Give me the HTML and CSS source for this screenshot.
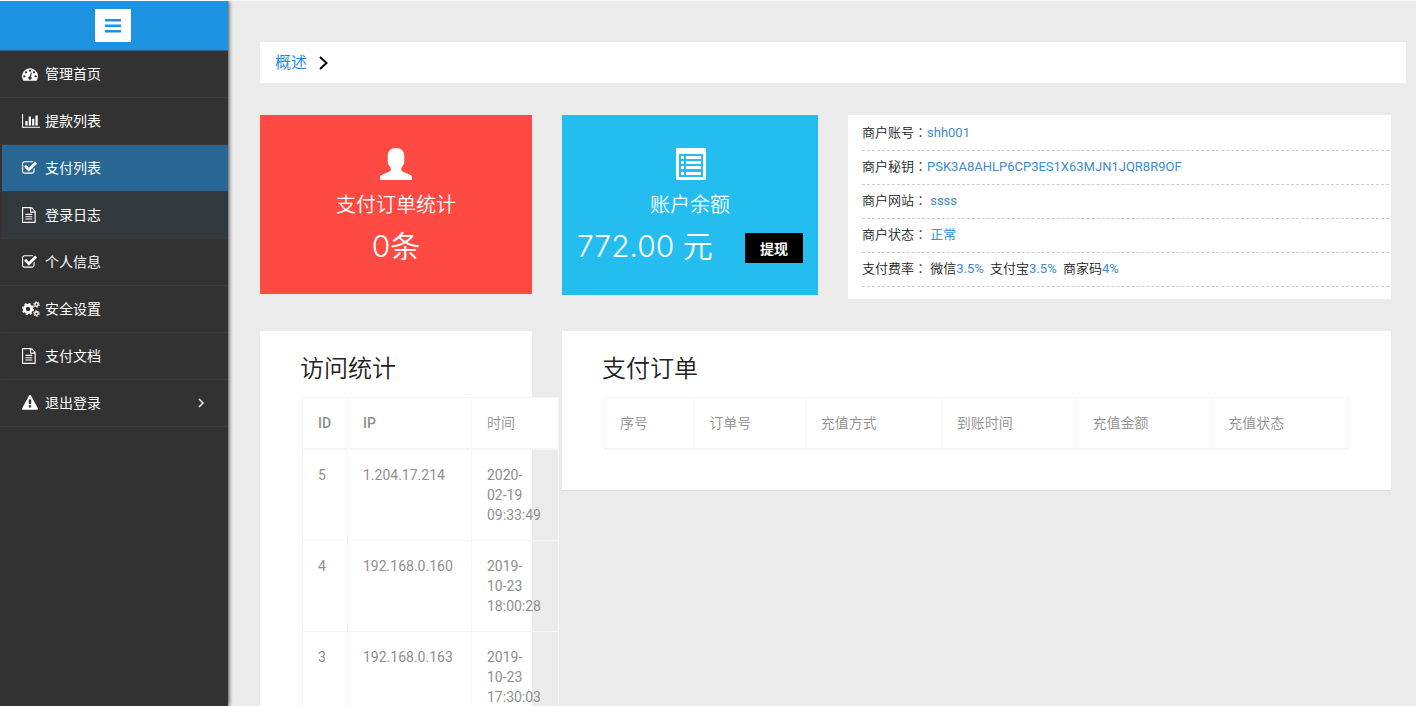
FILE: index.html
```html
<!DOCTYPE html>
<html lang="zh-CN">
<head>
<meta charset="utf-8">
<title>管理首页</title>
<link rel="stylesheet" href="styles.css">
</head>
<body>
<div class="layout">
  <aside class="sidebar">
    <div class="sidebar-head">
      <button class="toggle" type="button" aria-label="菜单">
        <svg width="16" height="14" viewBox="0 0 16 14"><path d="M0 0h16v2.500H0zM0 5.500h16v2.500H0zM0 11h16v2.500H0z"/></svg>
      </button>
    </div>
    <nav class="menu">
      <a class="item" href="#"><svg class="icon" viewBox="0 0 1792 1792"><path d="M384 1152q0-53-37.500-90.500t-90.500-37.500-90.500 37.500-37.500 90.500 37.500 90.500 90.500 37.500 90.500-37.500 37.500-90.500zm192-448q0-53-37.500-90.500t-90.500-37.500-90.500 37.500-37.500 90.500 37.500 90.500 90.500 37.500 90.500-37.500 37.500-90.500zm428 481l101-382q6-26-7.500-48.500t-38.500-29.500-48 6.500-30 39.500l-101 382q-60 5-107 43.500t-63 98.500q-20 77 20 146t117 89 146-20 89-117q16-60-6-117t-72-91zm660-33q0-53-37.500-90.500t-90.500-37.500-90.500 37.500-37.500 90.500 37.500 90.500 90.500 37.500 90.500-37.500 37.500-90.500zm-640-640q0-53-37.500-90.500t-90.500-37.500-90.500 37.500-37.500 90.500 37.500 90.500 90.500 37.500 90.500-37.500 37.500-90.500zm448 192q0-53-37.500-90.500t-90.500-37.500-90.500 37.500-37.500 90.500 37.500 90.500 90.500 37.500 90.500-37.500 37.500-90.500zm320 448q0 261-141 483-19 29-54 29h-1402q-35 0-54-29-141-221-141-483 0-182 71-348t191-286 286-191 348-71 348 71 286 191 191 286 71 348z"/></svg><span>管理首页</span></a>
      <a class="item" href="#"><svg class="icon icon-wide" viewBox="0 0 2048 1792"><path d="M640 896v512h-256v-512h256zm384-512v1024h-256v-1024h256zm1024 1152v128h-2048v-1536h128v1408h1920zm-640-896v768h-256v-768h256zm384-384v1152h-256v-1152h256z"/></svg><span>提款列表</span></a>
      <a class="item item-active" href="#"><svg class="icon" viewBox="64 0 1792 1792"><path d="M1472 930v318q0 119-84.500 203.500t-203.500 84.500h-832q-119 0-203.500-84.500t-84.500-203.500v-832q0-119 84.500-203.500t203.500-84.500h832q63 0 117 25 15 7 18 23 3 17-9 29l-49 49q-10 10-23 10-3 0-9-2-23-6-45-6h-832q-66 0-113 47t-47 113v832q0 66 47 113t113 47h832q66 0 113-47t47-113v-254q0-13 9-22l64-64q10-10 23-10 6 0 12 3 20 8 20 29zm231-489l-814 814q-24 24-57 24t-57-24l-430-430q-24-24-24-57t24-57l110-110q24-24 57-24t57 24l263 263 647-647q24-24 57-24t57 24l110 110q24 24 24 57t-24 57z"/></svg><span>支付列表</span></a>
      <a class="item item-open" href="#"><svg class="icon" viewBox="128 0 1792 1792"><path d="M1596 380q28 28 48 76t20 88v1152q0 40-28 68t-68 28h-1344q-40 0-68-28t-28-68v-1600q0-40 28-68t68-28h896q40 0 88 20t76 48zm-444-244v376h376q-10-29-22-41l-313-313q-12-12-41-22zm384 1528v-1024h-416q-40 0-68-28t-28-68v-416h-768v1536h1280zm-1024-864q0-14 9-23t23-9h704q14 0 23 9t9 23v64q0 14-9 23t-23 9h-704q-14 0-23-9t-9-23v-64zm736 224q14 0 23 9t9 23v64q0 14-9 23t-23 9h-704q-14 0-23-9t-9-23v-64q0-14 9-23t23-9h704zm0 256q14 0 23 9t9 23v64q0 14-9 23t-23 9h-704q-14 0-23-9t-9-23v-64q0-14 9-23t23-9h704z"/></svg><span>登录日志</span></a>
      <a class="item" href="#"><svg class="icon" viewBox="64 0 1792 1792"><path d="M1472 930v318q0 119-84.500 203.500t-203.500 84.500h-832q-119 0-203.500-84.500t-84.500-203.500v-832q0-119 84.500-203.500t203.500-84.500h832q63 0 117 25 15 7 18 23 3 17-9 29l-49 49q-10 10-23 10-3 0-9-2-23-6-45-6h-832q-66 0-113 47t-47 113v832q0 66 47 113t113 47h832q66 0 113-47t47-113v-254q0-13 9-22l64-64q10-10 23-10 6 0 12 3 20 8 20 29zm231-489l-814 814q-24 24-57 24t-57-24l-430-430q-24-24-24-57t24-57l110-110q24-24 57-24t57 24l263 263 647-647q24-24 57-24t57 24l110 110q24 24 24 57t-24 57z"/></svg><span>个人信息</span></a>
      <a class="item" href="#"><svg class="icon icon-wide" viewBox="0 0 18 16"><g fill="none" stroke="#fff"><circle cx="6" cy="8" r="3.600" stroke-width="2.800"/><circle cx="6" cy="8" r="5.300" stroke-width="1.600" stroke-dasharray="2.080 2.080"/><circle cx="14.500" cy="3.500" r="1.700" stroke-width="1.400"/><circle cx="14.500" cy="3.500" r="2.800" stroke-width="1" stroke-dasharray="1.470 1.460"/><circle cx="14.500" cy="12.500" r="1.700" stroke-width="1.400"/><circle cx="14.500" cy="12.500" r="2.800" stroke-width="1" stroke-dasharray="1.470 1.460"/></g></svg><span>安全设置</span></a>
      <a class="item" href="#"><svg class="icon" viewBox="128 0 1792 1792"><path d="M1596 380q28 28 48 76t20 88v1152q0 40-28 68t-68 28h-1344q-40 0-68-28t-28-68v-1600q0-40 28-68t68-28h896q40 0 88 20t76 48zm-444-244v376h376q-10-29-22-41l-313-313q-12-12-41-22zm384 1528v-1024h-416q-40 0-68-28t-28-68v-416h-768v1536h1280zm-1024-864q0-14 9-23t23-9h704q14 0 23 9t9 23v64q0 14-9 23t-23 9h-704q-14 0-23-9t-9-23v-64zm736 224q14 0 23 9t9 23v64q0 14-9 23t-23 9h-704q-14 0-23-9t-9-23v-64q0-14 9-23t23-9h704zm0 256q14 0 23 9t9 23v64q0 14-9 23t-23 9h-704q-14 0-23-9t-9-23v-64q0-14 9-23t23-9h704z"/></svg><span>支付文档</span></a>
      <a class="item" href="#"><svg class="icon" viewBox="0 0 1792 1792"><path d="M1024 1375v-190q0-14-9.500-23.500t-22.500-9.500h-192q-13 0-22.500 9.500t-9.500 23.500v190q0 14 9.500 23.500t22.500 9.500h192q13 0 22.500-9.500t9.500-23.500zm-2-374l18-459q0-12-10-19-13-11-24-11h-220q-11 0-24 11-10 7-10 21l17 457q0 10 10 16.500t24 6.500h185q14 0 23.500-6.500t10.500-16.500zm-14-934l768 1408q35 63-2 126-17 29-46.500 46t-63.500 17h-1536q-34 0-63.500-17t-46.500-46q-37-63-2-126l768-1408q17-31 47-49t65-18 65 18 47 49z"/></svg><span>退出登录</span><svg class="caret" width="6" height="10" viewBox="0 0 6 10"><path d="M1 1l4 4-4 4" fill="none" stroke="#fff" stroke-width="1.500"/></svg></a>
    </nav>
  </aside>

  <main class="main">
    <div class="crumbs"><a href="#">概述</a><svg width="9" height="14" viewBox="0 0 9 14"><path d="M1 1l6.500 6L1 13" fill="none" stroke="#000" stroke-width="2"/></svg></div>

    <div class="grid">
      <section class="stat stat-red">
        <svg width="32" height="32" viewBox="0 0 32 32"><path d="M16 0c5 0 8.300 3 8.300 8v5c0 3-1.300 5-3 6.500v2.300c0 1 .7 1.600 1.700 2l6.500 2.700c1.700.8 2.500 1.500 2.500 3V32H0v-2.500c0-1.500.8-2.200 2.500-3L9 23.800c1-.4 1.700-1 1.700-2v-2.300C9 18 7.700 16 7.700 13V8c0-5 3.300-8 8.300-8z"/></svg>
        <h3>支付订单统计</h3>
        <p class="figure">0条</p>
      </section>
      <section class="stat stat-blue">
        <svg width="32" height="32" viewBox="0 0 32 32"><path fill-rule="evenodd" d="M2 0h30v32H2zM5 6v23h24V6zM7 8h3v3H7zM12 8h15v3H12zM7 13h3v3H7zM12 13h15v3H12zM7 18h3v3H7zM12 18h15v3H12zM7 24h3v3H7zM12 24h15v3H12z"/></svg>
        <h3>账户余额</h3>
        <div class="balance"><p class="figure">772.00 元</p><button class="withdraw" type="button">提现</button></div>
      </section>
      <section class="info">
        <p>商户账号<span class="colon" lang="zh-TW">：</span><b>shh001</b></p>
        <p>商户秘钥<span class="colon" lang="zh-TW">：</span><b>PSK3A8AHLP6CP3ES1X63MJN1JQR8R9OF</b></p>
        <p>商户网站<span class="colon" lang="zh-TW">：</span> <b>ssss</b></p>
        <p>商户状态<span class="colon" lang="zh-TW">：</span> <a href="#">正常</a></p>
        <p>支付费率<span class="colon" lang="zh-TW">：</span> 微信<b>3.5%</b>&nbsp; 支付宝<b>3.5%</b>&nbsp; 商家码<b>4%</b></p>
      </section>

      <section class="panel panel-visits">
        <h2>访问统计</h2>
        <table class="visits">
          <thead><tr><th class="col-id">ID</th><th class="col-ip">IP</th><th class="col-time">时间</th></tr></thead>
          <tbody>
            <tr><td>5</td><td>1.204.17.214</td><td>2020-<br>02-19<br>09:33:49</td></tr>
            <tr><td>4</td><td>192.168.0.160</td><td>2019-<br>10-23<br>18:00:28</td></tr>
            <tr><td>3</td><td>192.168.0.163</td><td>2019-<br>10-23<br>17:30:03</td></tr>
          </tbody>
        </table>
      </section>
      <section class="panel panel-orders">
        <h2>支付订单</h2>
        <table class="orders">
          <thead><tr><th class="col-no">序号</th><th class="col-order">订单号</th><th>充值方式</th><th>到账时间</th><th>充值金额</th><th>充值状态</th></tr></thead>
        </table>
      </section>
    </div>
  </main>
</div>
</body>
</html>
```

FILE: styles.css
```css
* { box-sizing: border-box; }
body {
  margin: 0;
  background: #ebebeb;
  color: #222;
  font: 14px/20px Roboto, "Noto Sans CJK SC", sans-serif;
}
h2, h3, p { margin: 0; font-weight: 350; }
a { color: #1583d8; text-decoration: none; }
button { border: 0; padding: 0; font-family: inherit; }

.layout {
  display: flex;
  height: 100vh;
  overflow: hidden;
  border-top: 1px solid #f8f8f8;
}

/* Sidebar */
.sidebar {
  flex: none;
  width: 228px;
  background: #323232;
  box-shadow: 1px 0 4px rgba(0, 0, 0, .7);
}
.sidebar-head {
  height: 50px;
  padding: 8px 0 0 95px;
  border-bottom: 1px solid #2a5f88;
  background: #1d92e1;
}
.toggle {
  display: flex;
  align-items: center;
  justify-content: center;
  width: 36px;
  height: 33px;
  background: #fff;
}
.toggle svg { fill: #1d92e1; }
.item {
  display: flex;
  align-items: center;
  height: 47px;
  padding: 0 24px 0 20px;
  border-left: 2px solid #323232;
  border-bottom: 1px solid #3b3b3b;
  color: #fff;
}
.item span { margin-right: auto; }
.item-active { background: #286694; }
.item-open { background: #32393c; }
.icon {
  width: 16px;
  height: 16px;
  margin-right: 7px;
  fill: #fff;
}
.icon-wide { width: 18px; margin-right: 5px; }

/* Content */
.main {
  flex: 1;
  min-width: 0;
  padding: 41px 25px 0 32px;
}
.crumbs {
  display: flex;
  align-items: center;
  gap: 12px;
  height: 41px;
  margin: 0 -15px 32px 0;
  padding-left: 15px;
  background: #fff;
  font-size: 16px;
  font-weight: 350;
}
.grid {
  display: grid;
  grid-template-columns: minmax(0, 272fr) minmax(0, 256fr) minmax(0, 543fr);
  gap: 32px 30px;
  align-items: start;
}
.stat {
  display: flex;
  flex-direction: column;
  align-items: center;
  padding: 33px 15px 28px;
  color: #fff;
}
.stat svg { fill: #fff; }
.stat-red { background: #ff4a43; }
.stat-blue { padding-bottom: 29px; background: #23bdef; }
.stat h3 { margin: 10px 0 6px; font-size: 20px; line-height: 30px; }
.figure {
  font: 350 30px/40px Inter, "Noto Sans CJK SC", sans-serif;
}
.balance {
  display: flex;
  align-items: flex-end;
  justify-content: space-between;
  width: 100%;
}
.withdraw {
  width: 58px;
  height: 30px;
  margin-bottom: 3px;
  background: #000;
  color: #fff;
  font-size: 14px;
  font-weight: 700;
}
.info {
  padding: 2px 2px 12px 14px;
  background: #fff;
  font-size: 13px;
}
.info p {
  height: 34px;
  padding-top: 6px;
  border-bottom: 1px dashed #ccc;
}
.info b { color: #428bca; font-weight: 400; }
.colon { font-family: "Noto Sans CJK TC", sans-serif; line-height: 1; }

/* Panels */
.panel {
  padding: 20px 40px 40px;
  background: #fff;
  box-shadow: 0 1px 1px rgba(0, 0, 0, .05);
}
.panel-orders { grid-column: span 2; }
.panel h2 {
  margin-bottom: 10px;
  font-size: 24px;
  line-height: 36px;
}
table {
  margin: 0 2px;
  border-collapse: collapse;
  table-layout: fixed;
  color: #8f8f8f;
}
th, td {
  padding: 15px;
  border: 1px solid #f5f5f5;
  text-align: left;
  vertical-align: top;
}
th { border-bottom-width: 2px; background: #fff; font-weight: 500; }
.visits { width: 257px; }
.visits .col-id { width: 45px; }
.visits .col-ip { width: 124px; }
.visits .col-time, .orders th { font-weight: 350; }
.orders { width: calc(100% - 4px); }
.orders .col-no { width: 12%; }
.orders .col-order { width: 15%; }
```
